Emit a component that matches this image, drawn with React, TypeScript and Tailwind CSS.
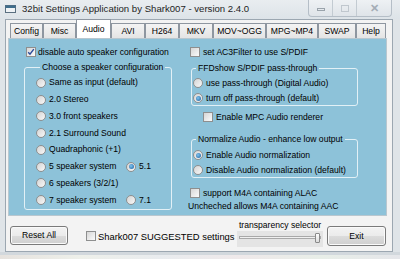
import React from "react";

const F = { fontFamily: '"Liberation Sans", Arial, sans-serif' };

function Radio({ checked }: { checked?: boolean }) {
  return (
    <span className="relative flex h-[10px] w-[10px] shrink-0 items-center justify-center rounded-full border border-[#8e8f8f] bg-[linear-gradient(135deg,#d4d4d4,#f8f8f8)]">
      {checked && (
        <span className="h-[5px] w-[5px] rounded-full bg-[radial-gradient(circle_at_40%_40%,#7fc4f0,#1a5d9c)]" />
      )}
    </span>
  );
}

function Check({ checked }: { checked?: boolean }) {
  return (
    <span className="relative flex h-[10px] w-[10px] shrink-0 items-center justify-center border border-[#8e8f8f] bg-[linear-gradient(135deg,#d6d6d6,#fbfbfb)]">
      {checked && (
        <svg width="8" height="8" viewBox="0 0 8 8">
          <path d="M1.2 4.2 L3 6.2 L6.8 1.2" fill="none" stroke="#2a4a9a" strokeWidth="1.4" />
        </svg>
      )}
    </span>
  );
}

function RadioRow({ label, checked, h }: { label: string; checked?: boolean; h: string }) {
  return (
    <div className={`flex items-center gap-[3px] ${h}`}>
      <Radio checked={checked} />
      <span className="whitespace-nowrap">{label}</span>
    </div>
  );
}

function Tab({ label, w, sel }: { label: string; w: string; sel?: boolean }) {
  return (
    <div
      className={`flex shrink-0 items-center justify-center border-l border-r border-t border-[#8e96a0] ${w} ${
        sel
          ? "h-[19px] bg-white"
          : "h-[15px] bg-[linear-gradient(#f4f4f4,#e4e4e4)]"
      }`}
    >
      {label}
    </div>
  );
}

function Btn({ label, w, h }: { label: string; w: string; h: string }) {
  return (
    <div
      className={`flex items-center justify-center rounded-[3px] border border-[#7a7a7a] bg-[linear-gradient(#f3f3f3_0%,#ebebeb_50%,#dcdcdc_51%,#cfcfcf_100%)] shadow-[inset_0_0_0_1px_#fafafa] ${w} ${h}`}
    >
      {label}
    </div>
  );
}

export default function App() {
  return (
    <div
      className="flex h-[259px] w-[400px] flex-col overflow-hidden bg-[#dfe4e8] text-[8.6px] leading-[11px] text-black"
      style={F}
    >
      {/* title bar */}
      <div className="flex h-[19px] shrink-0 items-start bg-[linear-gradient(#e9edf0,#dde3e8)]">
        <svg className="ml-[5px] mt-[5px]" width="11" height="8" viewBox="0 0 11 8">
          <rect x="0.5" y="0.5" width="10" height="7" fill="#eef2f5" stroke="#5a6f80" />
          <rect x="0.5" y="0.5" width="10" height="2.5" fill="#3e6d8c" />
        </svg>
        <span className="ml-[6px] text-[9.6px] leading-[18px] text-[#1e1e1e]">
          32bit Settings Application by Shark007 - version 2.4.0
        </span>
        <div className="ml-auto mr-[8px] flex h-[17px] rounded-b-[4px] border border-t-0 border-[#b5bec7] bg-[linear-gradient(#eef1f4,#dfe4e9)]">
          <div className="flex w-[24px] items-center justify-center border-r border-[#c3cbd2]">
            <span className="mt-[3px] h-[3px] w-[8px] border border-[#9aa3ab]" />
          </div>
          <div className="flex w-[24px] items-center justify-center border-r border-[#c3cbd2]">
            <span className="h-[7px] w-[8px] border border-[#c0c7ce]" />
          </div>
          <div className="flex w-[34px] items-center justify-center text-[11px] font-bold text-[#a4adb6]">
            ✕
          </div>
        </div>
      </div>

      {/* client */}
      <div className="flex shrink-0 pl-[5px]">
        <div className="flex h-[233px] w-[388px] flex-col border border-[#9ca7b1] bg-[#f3f3f3]">
          {/* tabs */}
          <div className="ml-[4px] flex h-[18px] items-end">
            <Tab label="Config" w="w-[33px]" />
            <Tab label="Misc" w="w-[33px]" />
            <Tab label="Audio" w="w-[35px]" sel />
            <Tab label="AVI" w="w-[34px]" />
            <Tab label="H264" w="w-[34px]" />
            <Tab label="MKV" w="w-[34px]" />
            <Tab label="MOV~OGG" w="w-[53px]" />
            <Tab label="MPG~MP4" w="w-[52px]" />
            <Tab label="SWAP" w="w-[38px]" />
            <Tab label="Help" w="w-[30px]" />
          </div>

          {/* panel */}
          <div className="ml-[2px] flex h-[178px] w-[379px] border border-[#b9c7cf] bg-[#8dc2d9]">
            {/* left column */}
            <div className="ml-[15px] flex w-[148px] flex-col pt-[6px]">
              <div className="flex h-[14px] items-center gap-[2px] pl-[2px]">
                <Check checked />
                <span className="whitespace-nowrap">disable auto speaker configuration</span>
              </div>
              <fieldset className="mt-[2px] h-[149px] rounded-[3px] border border-[#e2f0f6] pl-[11px] pt-[1.5px]">
                <legend className="ml-[4px] px-[2px] leading-[12px]">Choose a speaker configuration</legend>
                <RadioRow h="h-[16.75px]" label="Same as input (default)" />
                <RadioRow h="h-[16.75px]" label="2.0 Stereo" />
                <RadioRow h="h-[16.75px]" label="3.0 front speakers" />
                <RadioRow h="h-[16.75px]" label="2.1 Surround Sound" />
                <RadioRow h="h-[16.75px]" label="Quadraphonic (+1)" />
                <div className="flex h-[16.75px] items-center">
                  <div className="w-[90px]">
                    <RadioRow h="h-[16.75px]" label="5 speaker system" />
                  </div>
                  <RadioRow h="h-[16.75px]" label="5.1" checked />
                </div>
                <RadioRow h="h-[16.75px]" label="6 speakers (3/2/1)" />
                <div className="flex h-[16.75px] items-center">
                  <div className="w-[90px]">
                    <RadioRow h="h-[16.75px]" label="7 speaker system" />
                  </div>
                  <RadioRow h="h-[16.75px]" label="7.1" />
                </div>
              </fieldset>
            </div>

            {/* right column */}
            <div className="ml-[16px] flex w-[170px] flex-col pt-[6px]">
              <div className="flex h-[14px] items-center gap-[3px] pl-[2px]">
                <Check />
                <span className="whitespace-nowrap">set AC3Filter to use S/PDIF</span>
              </div>
              <fieldset className="mt-[3px] ml-[3px] h-[44px] w-[167px] rounded-[3px] border border-[#e2f0f6] pl-[1px] pt-[1.5px]">
                <legend className="ml-[3px] px-[2px] leading-[12px]">FFDshow S/PDIF pass-through</legend>
                <RadioRow h="h-[15px]" label="use pass-through (Digital Audio)" />
                <RadioRow h="h-[15px]" label="turn off pass-through (default)" checked />
              </fieldset>
              <div className="ml-[15px] mt-[4px] flex h-[14px] items-center gap-[3px]">
                <Check />
                <span className="whitespace-nowrap">Enable MPC Audio renderer</span>
              </div>
              <fieldset className="mt-[9px] ml-[3px] h-[45px] w-[167px] rounded-[3px] border border-[#e2f0f6] pl-[1px] pt-[2.5px]">
                <legend className="ml-[3px] px-[2px] leading-[12px]">Normalize Audio - enhance low output</legend>
                <RadioRow h="h-[15px]" label="Enable Audio normalization" checked />
                <RadioRow h="h-[15px]" label="Disable Audio normalization (default)" />
              </fieldset>
              <div className="mt-[8px] flex h-[14px] items-center gap-[3px] pl-[2px]">
                <Check />
                <span className="whitespace-nowrap">support M4A containing ALAC</span>
              </div>
              <div className="h-[12px] whitespace-nowrap leading-[12px]">
                Uncheched allows M4A containing AAC
              </div>
            </div>
          </div>

          {/* bottom row */}
          <div className="flex items-start">
            <div className="ml-[4px] mt-[10px]">
              <Btn label="Reset All" w="w-[58px]" h="h-[19px]" />
            </div>
            <div className="ml-[18px] mt-[14px] flex h-[12px] w-[151px] items-center gap-[2px]">
              <Check />
              <span className="whitespace-nowrap text-[9.4px]">Shark007 SUGGESTED settings</span>
            </div>
            <div className="mt-[3px] flex w-[86px] flex-col items-center">
              <div className="h-[12px] whitespace-nowrap leading-[12px]">transparency selector</div>
              <div className="relative h-[16px] w-[86px] bg-[#e4e4e4]">
                <div className="absolute left-[2px] top-[5px] h-[3px] w-[82px] border border-[#a8a8a8] bg-[#f0f0f0]" />
                <div className="absolute left-[78px] top-[2px] h-[10px] w-[5px] rounded-[1px] border border-[#8a8a8a] bg-[linear-gradient(#fdfdfd,#dcdcdc)]" />
              </div>
            </div>
            <div className="ml-[4px] mt-[10px]">
              <Btn label="Exit" w="w-[59px]" h="h-[20px]" />
            </div>
          </div>
        </div>
      </div>

      {/* bottom frame / desktop */}
      <div className="h-[3px] shrink-0 bg-[#d2d8dd]" />
      <div className="flex-1 bg-[linear-gradient(90deg,#e6e2de,#eef0ea_20%,#e9ecef_40%,#efe9ea_60%,#e8eee8_80%,#e5e6ea)]" />
    </div>
  );
}
